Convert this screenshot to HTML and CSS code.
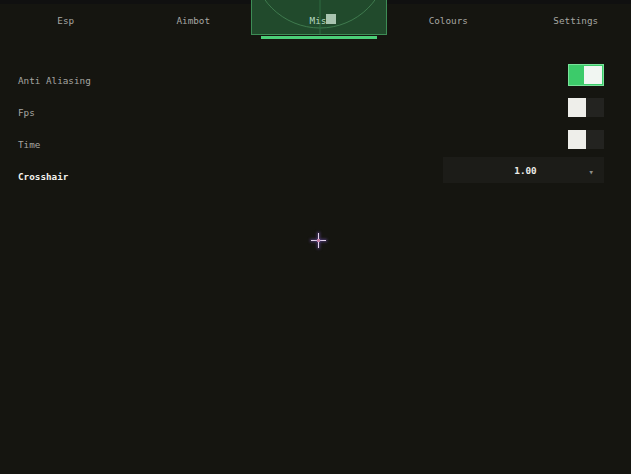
FILE: index.html
```html
<!DOCTYPE html>
<html>
<head>
<meta charset="utf-8">
<link rel="stylesheet" href="styles.css">
</head>
<body>
<div class="app">
  <nav class="tabs">
    <div class="tab">Esp</div>
    <div class="tab">Aimbot</div>
    <div class="tab active">
      <div class="tab-glow">
        <svg class="radar" viewBox="0 0 135 36" width="135" height="36">
          <circle cx="68" cy="-40" r="68" fill="none" stroke="#3f7a4e" stroke-width="1"/>
          <line x1="68" y1="0" x2="68" y2="36" stroke="#2f6a40" stroke-width="1"/>
        </svg>
      </div>
      <span class="tab-label">Misc</span>
      <span class="caret"></span>
      <span class="tab-bar"></span>
    </div>
    <div class="tab">Colours</div>
    <div class="tab">Settings</div>
  </nav>

  <section class="options">
    <div class="row">
      <span class="label">Anti Aliasing</span>
      <span class="toggle on"><span class="knob"></span></span>
    </div>
    <div class="row">
      <span class="label">Fps</span>
      <span class="toggle"><span class="knob"></span></span>
    </div>
    <div class="row">
      <span class="label">Time</span>
      <span class="toggle"><span class="knob"></span></span>
    </div>
    <div class="row">
      <span class="label strong">Crosshair</span>
      <div class="select">
        <span class="select-value">1.00</span>
        <span class="select-arrow">&#9662;</span>
      </div>
    </div>
  </section>

  <div class="crosshair">
    <span class="ch-h"></span>
    <span class="ch-v"></span>
    <span class="ch-dot"></span>
  </div>
</div>
</body>
</html>
```

FILE: styles.css
```css
html, body {
  margin: 0;
  padding: 0;
  height: 100%;
  background: #151510;
}

.app {
  position: relative;
  height: 100%;
  font-family: "DejaVu Sans Mono", "Liberation Mono", monospace;
  font-size: 9.3px;
  color: #a6a6a2;
  border-top: 4px solid #101010;
  box-sizing: border-box;
}

/* tab strip */
.tabs {
  display: grid;
  grid-template-columns: repeat(5, 127.5px);
  padding-left: 2px;
  height: 40px;
  margin-top: -4px;
}

.tab {
  position: relative;
  display: flex;
  align-items: center;
  justify-content: center;
  height: 40px;
}

.tab.active {
  color: #b7d9c0;
}

.tab-glow {
  position: absolute;
  left: -6px;
  right: -2px;
  top: 0;
  height: 35px;
  background: #214a2c;
  border: 1px solid #3d8c55;
  border-top: none;
  box-sizing: border-box;
  overflow: hidden;
}

.radar {
  display: block;
}

.tab-label {
  position: relative;
}

.caret {
  position: absolute;
  left: 69px;
  top: 14px;
  width: 10px;
  height: 10px;
  background: #a9c4b0;
}

.tab-bar {
  position: absolute;
  left: 4px;
  right: 8px;
  top: 36px;
  height: 3px;
  background: #4ccf78;
}

/* option rows */
.options {
  display: flex;
  flex-direction: column;
  padding: 24px 27px 0 18px;
}

.row {
  display: flex;
  justify-content: space-between;
  align-items: flex-start;
  height: 32px;
}

.label {
  margin-top: 11px;
  line-height: 12px;
}

.label.strong {
  color: #f2f2ee;
  font-weight: bold;
}

.toggle {
  display: flex;
  width: 36px;
  height: 19px;
  margin-top: 2px;
  background: #232320;
  box-sizing: border-box;
}

.toggle .knob {
  width: 18px;
  height: 19px;
  background: #eeeeea;
}

.toggle.on {
  height: 22px;
  margin-top: 0;
  justify-content: flex-end;
  background: #3ccb6a;
  border: 1px solid #78e39a;
  padding: 1px;
}

.toggle.on .knob {
  height: 18px;
  background: #f1f6f2;
}

.select {
  position: relative;
  display: flex;
  align-items: center;
  justify-content: center;
  width: 161px;
  height: 26px;
  margin-top: -3px;
  background: #1c1c18;
}

.select-value {
  color: #ecece8;
  font-weight: bold;
  margin-left: 4px;
}

.select-arrow {
  position: absolute;
  right: 10px;
  top: 11px;
  font-size: 9px;
  line-height: 9px;
  color: #8e8e8a;
}

/* centred crosshair overlay */
.crosshair {
  position: absolute;
  left: 311px;
  top: 229px;
  width: 15px;
  height: 15px;
}

.ch-h {
  position: absolute;
  left: 0;
  top: 7px;
  width: 15px;
  height: 1px;
  background: #e6d6ee;
  box-shadow: 0 0 3px 1px rgba(110, 80, 170, 0.6);
}

.ch-v {
  position: absolute;
  left: 7px;
  top: 0;
  width: 1px;
  height: 15px;
  background: #e6d6ee;
  box-shadow: 0 0 3px 1px rgba(110, 80, 170, 0.6);
}

.ch-dot {
  position: absolute;
  left: 6px;
  top: 6px;
  width: 3px;
  height: 3px;
  background: #c07aa0;
}
```
